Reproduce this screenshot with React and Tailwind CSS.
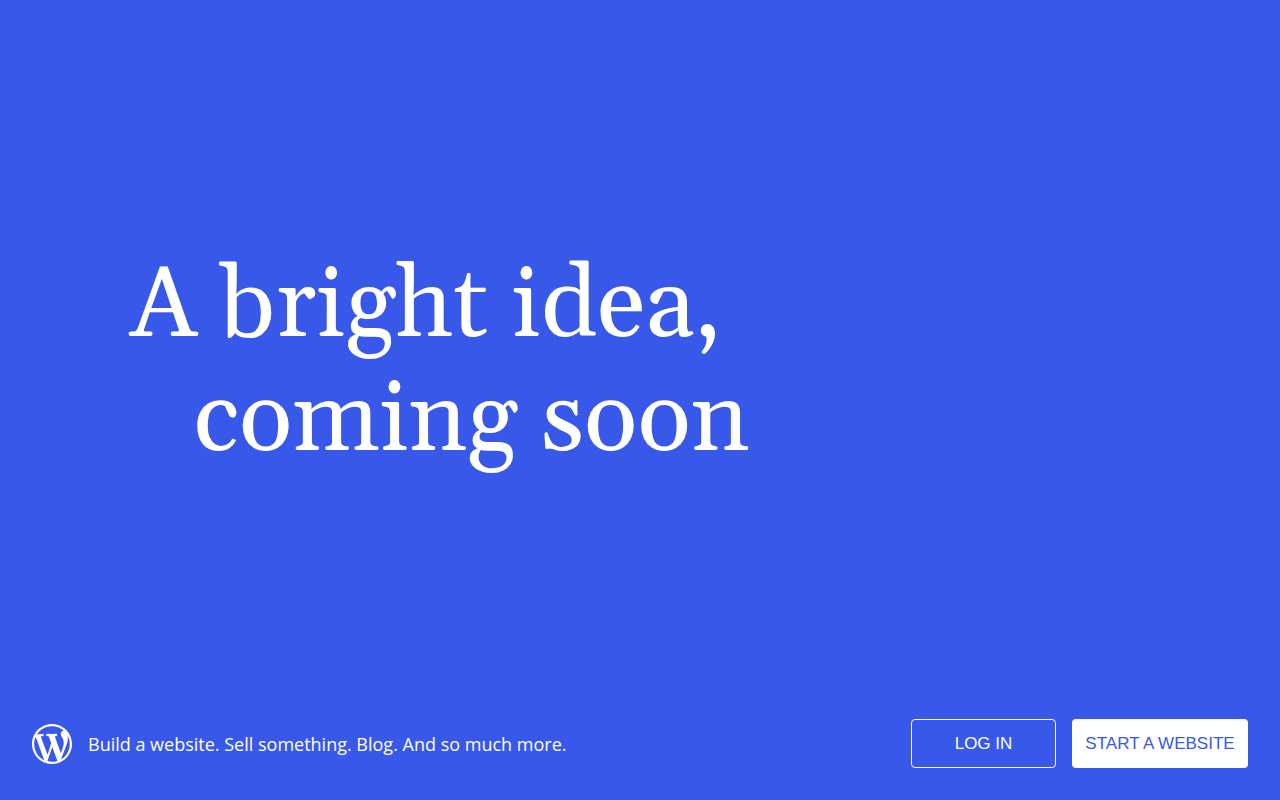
function WordPressLogo() {
  return (
    <svg viewBox="0 0 20 20" fill="currentColor" className="size-10" aria-hidden="true">
      <path d="M20 10c0-5.51-4.49-10-10-10C4.48 0 0 4.49 0 10c0 5.52 4.48 10 10 10 5.51 0 10-4.48 10-10zM7.78 15.37L4.37 6.22c.55-.02 1.17-.08 1.17-.08.5-.06.44-1.13-.06-1.11 0 0-1.45.11-2.37.11-.18 0-.37 0-.58-.01C4.12 2.69 6.87 1.11 10 1.11c2.33 0 4.45.87 6.05 2.34-.68-.11-1.65.39-1.65 1.58 0 .74.45 1.36.9 2.1.35.61.55 1.36.55 2.46 0 1.49-1.4 5-1.4 5l-3.03-8.37c.54-.02.82-.17.82-.17.5-.05.44-1.25-.06-1.22 0 0-1.44.12-2.38.12-.87 0-2.33-.12-2.33-.12-.5-.03-.56 1.2-.06 1.22l.92.08 1.26 3.41zM17.41 10c.24-.64.74-1.87.43-4.25.7 1.29 1.05 2.71 1.05 4.25 0 3.29-1.73 6.24-4.4 7.78.97-2.59 1.94-5.2 2.92-7.78zM6.1 18.09C3.12 16.65 1.11 13.53 1.11 10c0-1.3.23-2.48.72-3.59C3.25 10.3 4.67 14.2 6.1 18.09zm4.03-6.63l2.58 6.98c-.86.29-1.76.45-2.71.45-.79 0-1.57-.11-2.29-.33.81-2.38 1.62-4.74 2.42-7.1z" />
    </svg>
  )
}

export default function App() {
  return (
    <div className="min-h-screen flex flex-col bg-[#3858e9] text-white">
      <main className="flex-1 flex flex-col justify-center px-[130px] pt-10">
        <h1 className="font-['Georgia','Gelasio','Liberation_Serif',serif] text-[99px] leading-[114px]">
          A bright idea,
          <span className="block pl-16">coming soon</span>
        </h1>
      </main>

      <footer className="flex items-center justify-between p-8">
        <div className="flex items-center gap-4">
          <a href="#" aria-label="WordPress.com">
            <WordPressLogo />
          </a>
          <p className="font-['Open_Sans',sans-serif] text-lg">
            Build a website. Sell something. Blog. And so much more.
          </p>
        </div>

        <div className="flex gap-4 font-['Liberation_Sans',sans-serif] text-[17px]">
          <a href="#" className="flex items-center justify-center w-[145px] h-[49px] rounded border border-white">
            LOG IN
          </a>
          <a href="#" className="flex items-center justify-center w-44 h-[49px] rounded bg-white text-[#3858e9]">
            START A WEBSITE
          </a>
        </div>
      </footer>
    </div>
  )
}
